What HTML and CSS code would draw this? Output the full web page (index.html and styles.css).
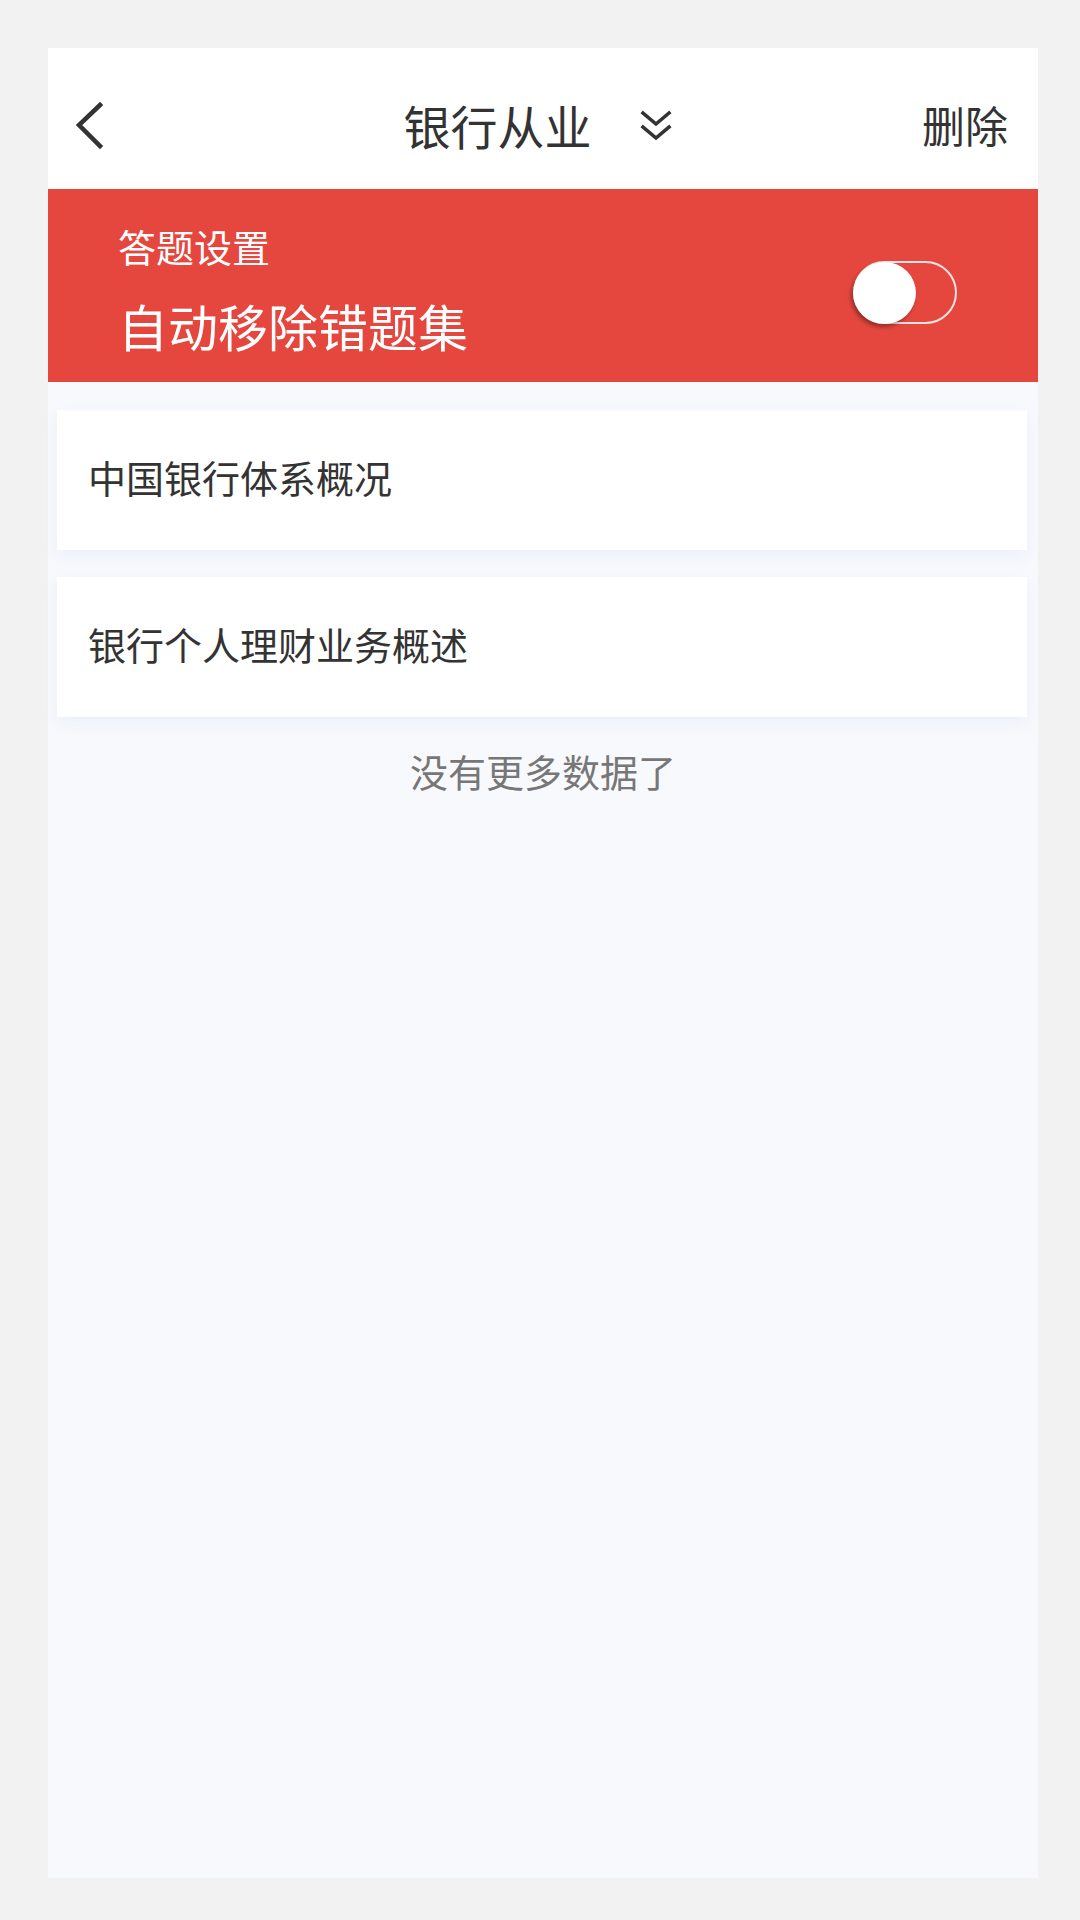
FILE: index.html
```html
<!DOCTYPE html>
<html lang="zh-CN">
<head>
<meta charset="utf-8">
<title>银行从业</title>
<link rel="stylesheet" href="styles.css">
</head>
<body>
<div class="card">
  <header class="topbar">
    <div class="back">
      <svg width="40" height="56" viewBox="0 0 40 56"><path d="M31 8 L10 28 L31 49" fill="none" stroke="#333" stroke-width="4.5" stroke-linecap="square" stroke-linejoin="miter"/></svg>
    </div>
    <div class="title-group">
      <span class="title">银行从业</span>
      <svg class="dbl" width="32" height="36" viewBox="0 0 32 36"><path d="M3 6 L16 17 L29 6 M3 20 L16 31 L29 20" fill="none" stroke="#333" stroke-width="3.6" stroke-linecap="square"/></svg>
    </div>
    <div class="action">删除</div>
  </header>
  <section class="settings">
    <div class="settings-text">
      <div class="settings-label">答题设置</div>
      <div class="settings-name">自动移除错题集</div>
    </div>
    <div class="toggle"><span class="knob"></span></div>
  </section>
  <main class="list">
    <div class="item">中国银行体系概况</div>
    <div class="item">银行个人理财业务概述</div>
    <div class="nomore">没有更多数据了</div>
  </main>
</div>
</body>
</html>
```

FILE: styles.css
```css
* { box-sizing: border-box; }
html, body { margin: 0; padding: 0; }
body {
  background: #f2f2f2;
  font-family: "Noto Sans CJK SC", "Noto Sans", sans-serif;
  width: 1080px;
  height: 1920px;
  padding: 48px 0 0 48px;
}
.card {
  width: 990px;
  height: 1830px;
  background: #f8f9fd;
  display: flex;
  flex-direction: column;
}
.topbar {
  height: 141px;
  background: #fff;
  display: grid;
  grid-template-columns: 1fr auto 1fr;
  align-items: center;
  padding: 12px 30px 0 21px;
  color: #333;
}
.back { display: flex; align-items: center; }
.back svg { display: block; }
.title-group {
  display: flex;
  align-items: center;
  gap: 48px;
  margin-right: 2px;
}
.title { font-size: 47px; line-height: 1; }
.dbl { display: block; }
.action { justify-self: end; font-size: 43px; line-height: 1; }
.settings {
  height: 193px;
  background: #e5473f;
  display: flex;
  justify-content: space-between;
  align-items: center;
  padding: 0 81px 0 70px;
  color: #fff;
}
.settings-text { display: flex; flex-direction: column; margin-top: 6px; }
.settings-label { font-size: 38px; line-height: 38px; margin-bottom: 35px; }
.settings-name { font-size: 50px; line-height: 50px; }
.toggle {
  position: relative;
  width: 104px;
  height: 63px;
  border: 2px solid rgba(255,255,255,0.85);
  border-radius: 32px;
  margin-top: 14px;
}
.knob {
  position: absolute;
  left: -2px;
  top: -1px;
  width: 63px;
  height: 62px;
  border-radius: 50%;
  background: #fff;
  box-shadow: -2px 3px 4px rgba(0,0,0,0.35);
}
.list {
  flex: 1;
  display: flex;
  flex-direction: column;
  gap: 27px;
  padding: 28px 11px 0 9px;
}
.item {
  height: 140px;
  background: #fff;
  display: flex;
  align-items: center;
  padding: 0 0 7px 31px;
  font-size: 38px;
  color: #333;
  box-shadow: 0 6px 14px rgba(214, 224, 246, 0.35);
}
.nomore {
  text-align: center;
  font-size: 38px;
  line-height: 38px;
  color: #777;
  margin-top: 8px;
  padding-left: 2px;
}
```
